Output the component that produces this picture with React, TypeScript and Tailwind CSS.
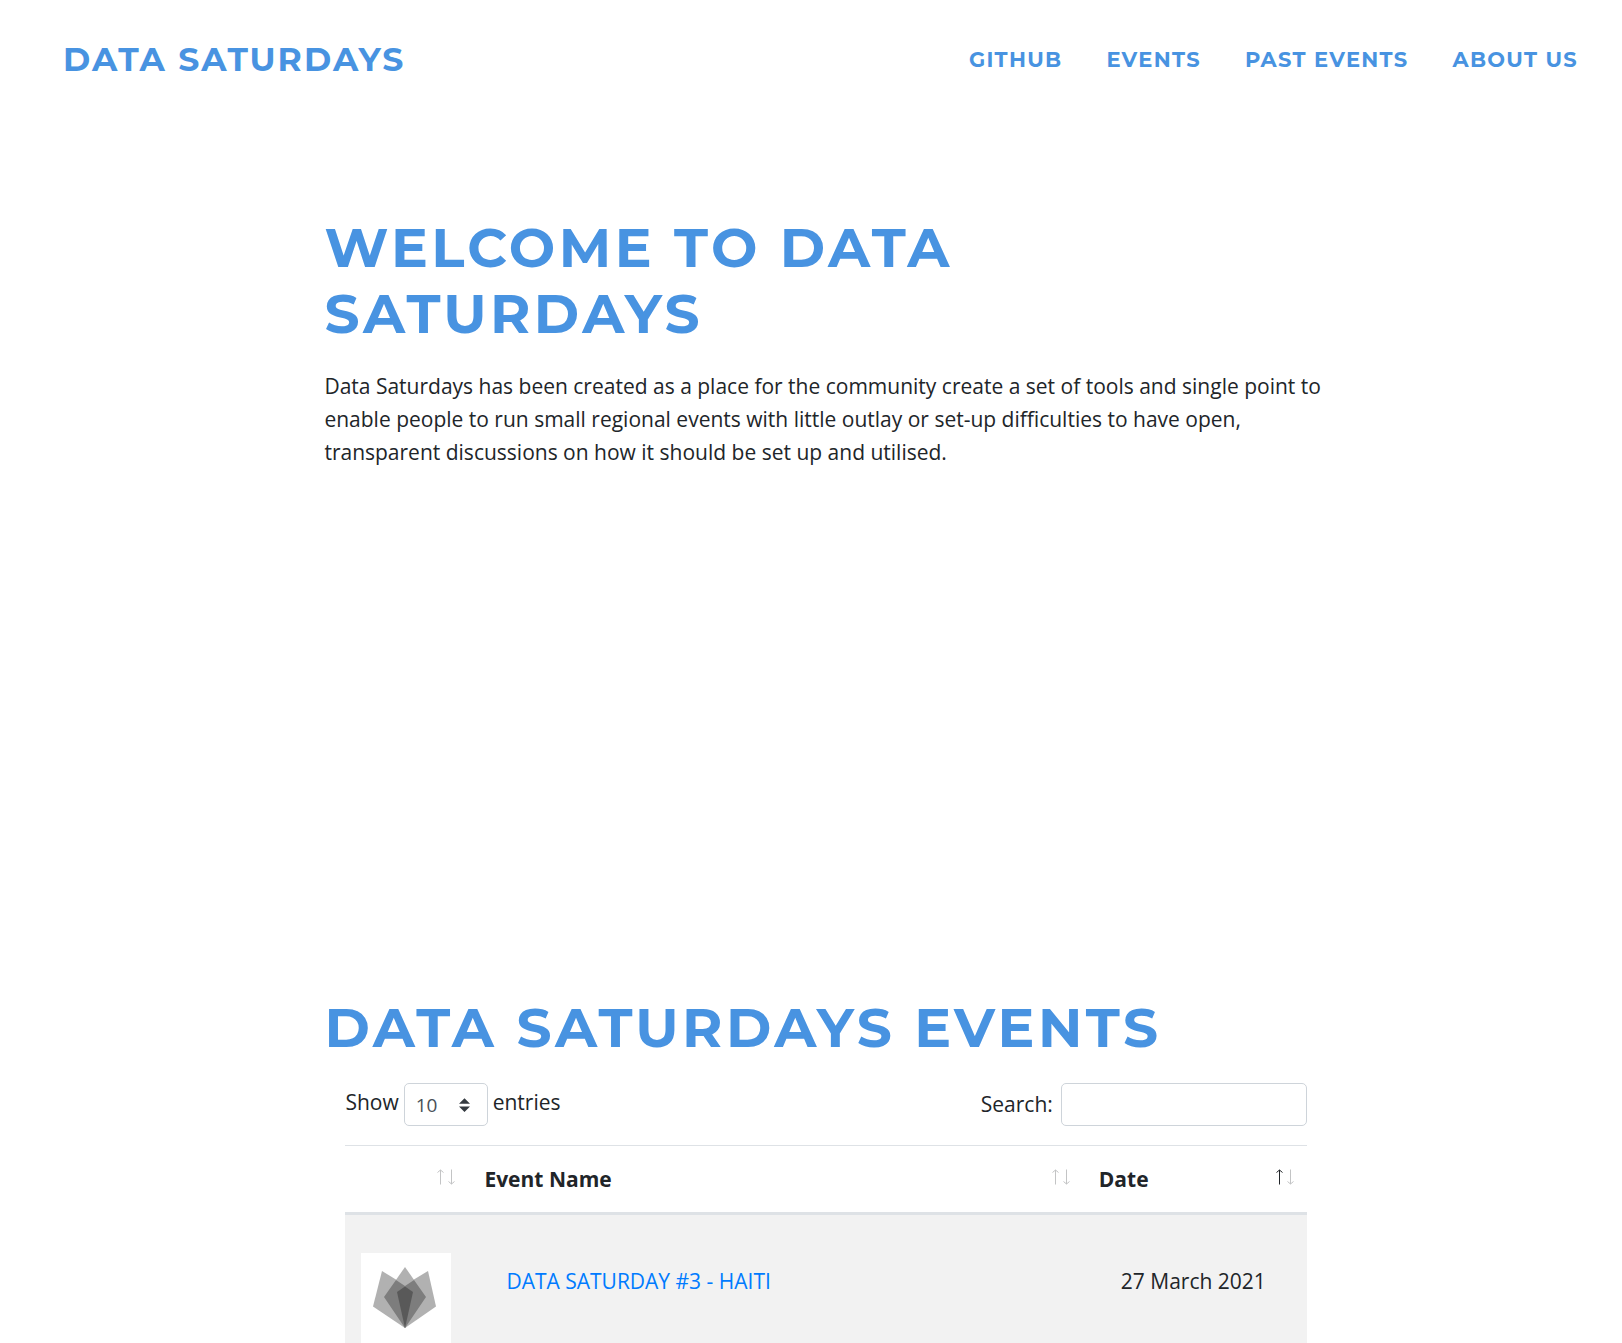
import React from "react";

const navLinks = ["GitHub", "Events", "Past Events", "About us"];

const brandText = "font-['Montserrat','Inter',sans-serif] font-bold tracking-[0.0625em] uppercase text-[#4893e1]";
const titleText = `${brandText} text-[55px] leading-[66px]`;

function SortArrows({ ascending = false }: { ascending?: boolean }) {
  return (
    <svg className="h-4 w-5 shrink-0" viewBox="0 0 20 16" fill="none" aria-hidden="true">
      <path d="M4.5 1V15.5M1.5 3.5L4.5 1L7.5 3.5" stroke={ascending ? "#212529" : "#c3c4c5"} />
      <path d="M15.5 0.5V15M12.5 12.5L15.5 15L18.5 12.5" stroke="#c3c4c5" />
    </svg>
  );
}

function ColumnHeader({ label, name, ascending }: { label: string; name: string; ascending?: boolean }) {
  return (
    <th
      scope="col"
      aria-sort={ascending ? "ascending" : "none"}
      className="border-t border-b-3 border-[#dee2e6] p-0 text-left font-bold"
    >
      <button
        type="button"
        aria-label={name}
        className="flex h-[66px] w-full items-start justify-between pt-[17px] pr-3 pl-4 text-left"
      >
        <span>{label}</span>
        <span className="pt-[6px]">
          <SortArrows ascending={ascending} />
        </span>
      </button>
    </th>
  );
}

function EventLogo() {
  return (
    <svg className="block size-[90px] bg-white" viewBox="0 0 90 90" role="img" aria-label="Data Saturday logo">
      <path d="M21 18L54.5 38.5L44 75L12 53.5Z" fill="#b1b1b1" />
      <path d="M67 18L33 38.5L44 75L75 53.5Z" fill="#b1b1b1" />
      <path d="M44 14L65 44L44 75L23 44Z" fill="#b1b1b1" />
      <path d="M35 27L44 33L53 27L65 44L44 75L23 44Z" fill="#7d7d7d" />
      <path d="M44 33.5L52 39L44 75L36 39Z" fill="#595959" />
    </svg>
  );
}

export default function App() {
  return (
    <div className="min-h-screen bg-white font-['Segoe_UI','Open_Sans',sans-serif] text-[21px] leading-[33px] text-[#212529]">
      <header className="flex h-[119px] items-center justify-between pr-11 pl-[63px]">
        <a href="#top" className={`${brandText} text-[33px]`}>
          Data Saturdays
        </a>
        <nav aria-label="Main" className="flex gap-11">
          {navLinks.map((link) => (
            <a key={link} href="#events" className={`${brandText} text-[21px]`}>
              {link}
            </a>
          ))}
        </nav>
      </header>

      <main className="mr-[18.2%] ml-[20%]">
        <section className="min-h-[876px] pt-24" id="top">
          <h1 className={titleText}>Welcome to Data Saturdays</h1>
          <p className="mt-[23px]">
            Data Saturdays has been created as a place for the community create a set of tools and single point to
            enable people to run small regional events with little outlay or set-up difficulties to have open,
            transparent discussions on how it should be set up and utilised.
          </p>
        </section>

        <section id="events">
          <h2 className={titleText}>Data Saturdays Events</h2>
          <div className="pt-[22px] pr-5 pl-[21px]">
            <div className="flex items-center justify-between">
              <label className="flex items-center gap-[5px]">
                <span className="pb-1">Show</span>
                <span className="relative">
                  <select
                    defaultValue="10"
                    className="block h-[43px] w-[84px] appearance-none rounded-[5px] border border-[#ced4da] bg-white pt-[2px] pl-[11px] text-[19px] text-[#495057]"
                  >
                    <option>10</option>
                    <option>25</option>
                    <option>50</option>
                    <option>100</option>
                  </select>
                  <svg
                    className="pointer-events-none absolute top-[15px] right-[18px] h-[14px] w-[11px]"
                    viewBox="0 0 4 5"
                    aria-hidden="true"
                  >
                    <path d="M2 0L0 2h4zm0 5L0 3h4z" fill="#343a40" />
                  </svg>
                </span>
                <span className="pb-1">entries</span>
              </label>
              <label className="flex items-center gap-2">
                <span>Search:</span>
                <input
                  type="search"
                  className="h-[43px] w-[246px] rounded-[5px] border border-[#ced4da] bg-white px-3 text-[19px] text-[#495057]"
                />
              </label>
            </div>

            <table className="mt-[19px] w-full table-fixed border-separate border-spacing-0">
              <colgroup>
                <col className="w-[123px]" />
                <col />
                <col className="w-[224px]" />
              </colgroup>
              <thead>
                <tr>
                  <ColumnHeader label="" name="Logo" />
                  <ColumnHeader label="Event Name" name="Event Name" />
                  <ColumnHeader label="Date" name="Date" ascending />
                </tr>
              </thead>
              <tbody>
                <tr className="bg-[#f2f2f2] align-top">
                  <td className="px-4 py-[38px]">
                    <EventLogo />
                  </td>
                  <td className="px-[38px] pt-[50px]">
                    <a href="#haiti" className="text-[#007bff]">
                      DATA SATURDAY #3 - HAITI
                    </a>
                  </td>
                  <td className="pt-[50px] pl-[38px]">27 March 2021</td>
                </tr>
              </tbody>
            </table>
          </div>
        </section>
      </main>
    </div>
  );
}
